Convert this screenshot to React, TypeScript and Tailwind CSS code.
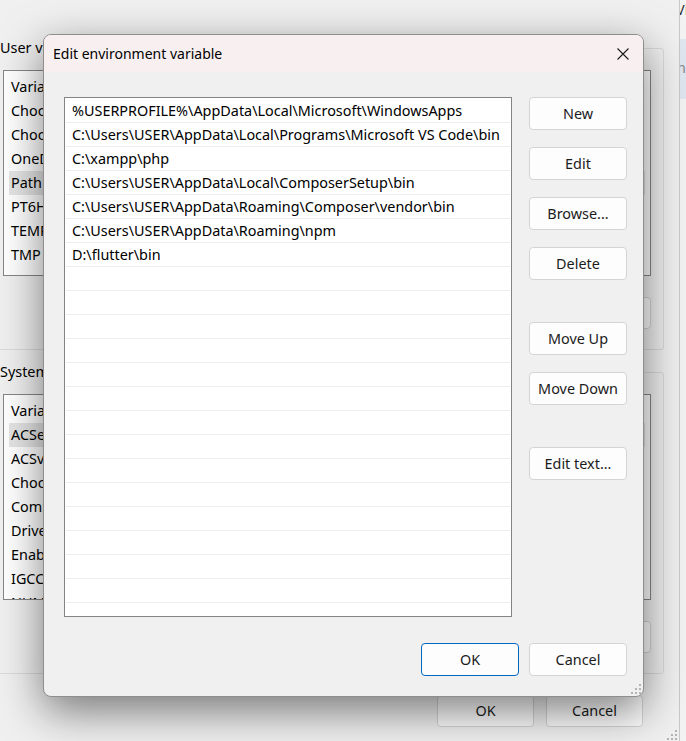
import { ReactNode } from "react"

const userVars = ["Variable", "ChocolateyLastPathUpdate", "ChocolateyToolsLocation", "OneDrive", "Path", "PT6HOME", "TEMP", "TMP"]
const sysVars = ["Variable", "ACSetupSvcPort", "ACSvcPort", "ChocolateyInstall", "ComSpec", "DriverData", "EnableLog", "IGCCDirectory", "NUMBER_OF_PROCESSORS"]

const paths = [
  "%USERPROFILE%\\AppData\\Local\\Microsoft\\WindowsApps",
  "C:\\Users\\USER\\AppData\\Local\\Programs\\Microsoft VS Code\\bin",
  "C:\\xampp\\php",
  "C:\\Users\\USER\\AppData\\Local\\ComposerSetup\\bin",
  "C:\\Users\\USER\\AppData\\Roaming\\Composer\\vendor\\bin",
  "C:\\Users\\USER\\AppData\\Roaming\\npm",
  "D:\\flutter\\bin",
]

const WinButton = ({ children, primary, className = "" }: { children: ReactNode, primary?: boolean, className?: string }) => (
  <div
    className={`flex items-center justify-center rounded-[4px] border bg-[#fdfdfd] text-[#1b1b1b] ${primary ? "border-[#0067c0]" : "border-[#d4d4d4]"} ${className}`}
  >
    {children}
  </div>
)

const Grip = () => (
  <svg width="12" height="12" viewBox="0 0 12 12">
    <rect x="9" y="1" width="2" height="2" fill="#b4b4b4" />
    <rect x="5" y="5" width="2" height="2" fill="#b4b4b4" />
    <rect x="9" y="5" width="2" height="2" fill="#b4b4b4" />
    <rect x="1" y="9" width="2" height="2" fill="#b4b4b4" />
    <rect x="5" y="9" width="2" height="2" fill="#b4b4b4" />
    <rect x="9" y="9" width="2" height="2" fill="#b4b4b4" />
  </svg>
)

// Environment Variables window behind the dialog, mostly covered
const VarGroup = ({ label, items, selected }: { label: string, items: string[], selected: number }) => (
  <div className="-ml-[8px] h-[302px] w-[672px] rounded-[3px] border border-[#dadada]">
    <div className="-mt-[11px] ml-[7px] w-fit whitespace-nowrap bg-[#f0f0f0] pr-1 leading-[20px]">{label}</div>
    <div className="ml-[10px] mt-[12px] h-[206px] w-[648px] overflow-hidden border border-[#868686] bg-white px-[5px] pt-[4px]">
      {items.map((item, i) => (
        <div key={item} className={`h-[24px] px-[2px] leading-[24px] whitespace-nowrap ${i === selected ? "bg-[#e5e5e5]" : ""}`}>
          {item}
        </div>
      ))}
    </div>
    <div className="ml-[10px] mt-[21px] flex w-[648px] justify-end gap-[10px]">
      <WinButton className="h-[32px] w-[97px]">New...</WinButton>
      <WinButton className="h-[32px] w-[97px]">Edit...</WinButton>
      <WinButton className="h-[32px] w-[97px]">Delete</WinButton>
    </div>
  </div>
)

export default function App() {
  const rows = Array.from({ length: 22 }, (_, i) => paths[i] ?? "")

  return (
    <div className="relative h-[741px] w-[686px] overflow-hidden bg-[#f0f0f0] font-['Noto_Sans',sans-serif] text-[14.4px] text-black">
      <div className="flex h-full">
        <div className="flex h-full w-[680px] flex-col border-r border-[#c9c9c9]">
          <div className="mt-[48px]">
            <VarGroup label="User variables for USER" items={userVars} selected={4} />
          </div>
          <div className="mt-[22px]">
            <VarGroup label="System variables" items={sysVars} selected={1} />
          </div>
          <div className="mt-[21px] flex justify-end gap-[12px] pr-[36px]">
            <WinButton className="h-[32px] w-[97px] border-[#cfcfcf]">OK</WinButton>
            <WinButton className="h-[32px] w-[97px] border-[#cfcfcf]">Cancel</WinButton>
          </div>
          <div className="mt-auto flex justify-end pr-[1px]">
            <Grip />
          </div>
        </div>
        <div className="flex-1 overflow-hidden bg-[#f3f3f3]">
          <div className="-ml-[4px] mt-[2px] leading-[16px] whitespace-nowrap text-[#333]">Vi</div>
          <div className="mt-[21px] h-[60px] bg-[#dfe6f0] pt-[22px]">
            <div className="-ml-[3px] leading-[14px] whitespace-nowrap text-[#888]">ne</div>
          </div>
        </div>
      </div>

      {/* Edit environment variable dialog */}
      <div className="absolute left-[43px] top-[34px] flex h-[663px] w-[601px] flex-col overflow-hidden rounded-[8px] border border-[#8e8e8e] bg-[#f0f0f0] shadow-[0_14px_44px_rgba(0,0,0,0.5)]">
        <div className="flex h-[37px] shrink-0 items-center justify-between bg-[#f8eff0] pl-[9px] pr-[14px] text-[14px]">
          <span>Edit environment variable</span>
          <svg width="12" height="12" viewBox="0 0 12 12" className="text-[#1b1b1b]">
            <path d="M0.5 0.5 L11.5 11.5 M11.5 0.5 L0.5 11.5" stroke="currentColor" strokeWidth="1.1" />
          </svg>
        </div>
        <div className="flex pl-[20px] pt-[25px]">
          <div className="h-[520px] w-[448px] overflow-hidden border border-[#848484] bg-white p-[1px]">
            {rows.map((p, i) => (
              <div key={i} className="h-[24px] border-b border-[#eeeeee] px-[6px] leading-[24px] whitespace-nowrap">
                {p}
              </div>
            ))}
          </div>
          <div className="ml-[17px] flex w-[98px] flex-col">
            <WinButton className="h-[33px]">New</WinButton>
            <WinButton className="mt-[17px] h-[33px]">Edit</WinButton>
            <WinButton className="mt-[17px] h-[33px]">Browse...</WinButton>
            <WinButton className="mt-[17px] h-[33px]">Delete</WinButton>
            <WinButton className="mt-[42px] h-[33px]">Move Up</WinButton>
            <WinButton className="mt-[17px] h-[33px]">Move Down</WinButton>
            <WinButton className="mt-[42px] h-[33px]">Edit text...</WinButton>
          </div>
        </div>
        <div className="mt-[26px] flex justify-end gap-[10px] pr-[16px]">
          <WinButton primary className="h-[33px] w-[98px]">OK</WinButton>
          <WinButton className="h-[33px] w-[98px]">Cancel</WinButton>
        </div>
        <div className="absolute bottom-[1px] right-[1px]">
          <Grip />
        </div>
      </div>
    </div>
  )
}
